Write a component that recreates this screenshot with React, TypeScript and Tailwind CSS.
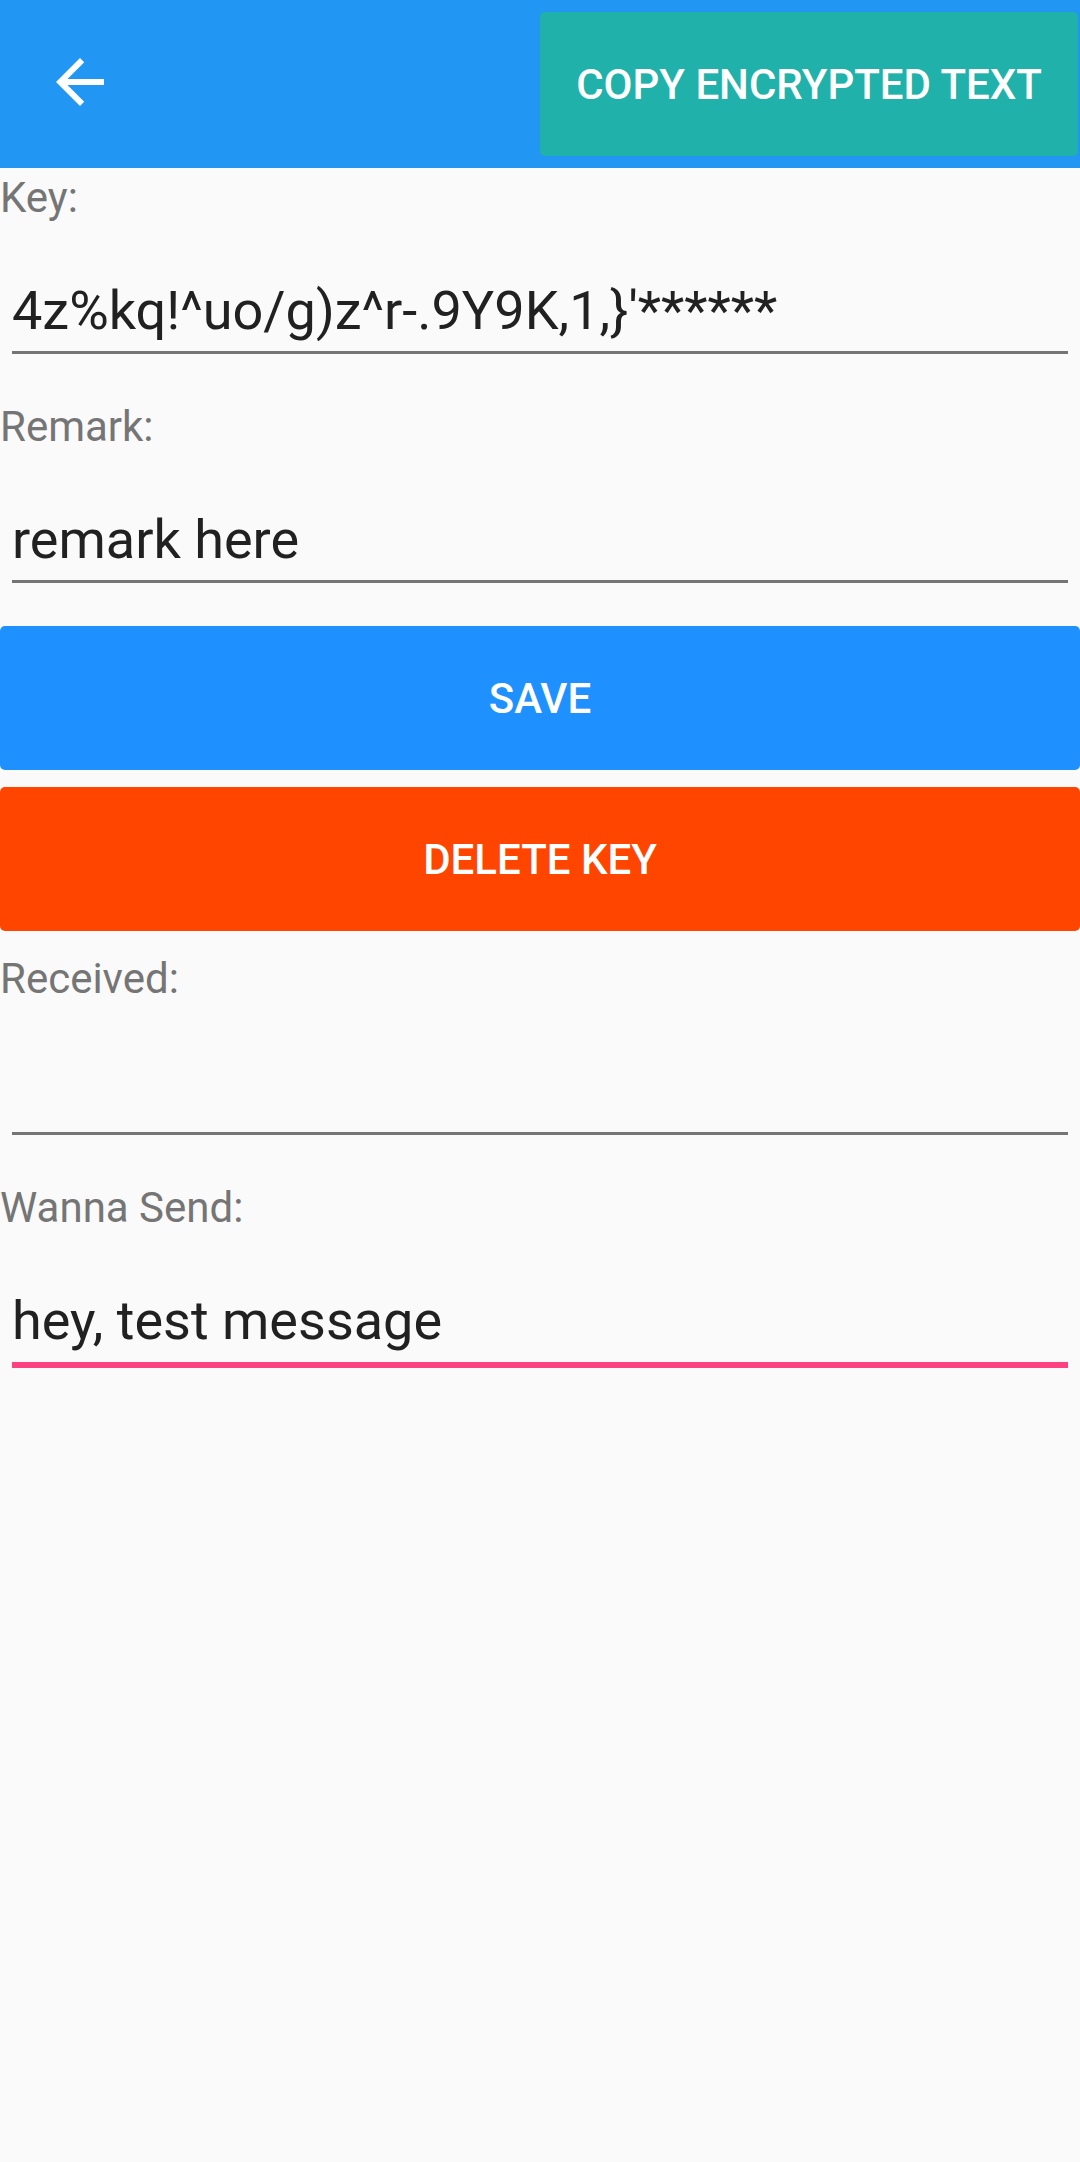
export default function App() {
  return (
    <div className="min-h-screen bg-[#fafafa] font-['Roboto',sans-serif]">
      {/* Toolbar */}
      <div className="flex h-[168px] items-center justify-between bg-[#2196f3]">
        <button className="ml-[44px] mt-[-4px] flex h-[72px] w-[72px] items-center justify-center" aria-label="Back">
          <svg viewBox="0 0 24 24" className="h-[72px] w-[72px]" fill="#ffffff">
            <path d="M20 11H7.83l5.59-5.59L12 4l-8 8 8 8 1.41-1.41L7.83 13H20v-2z" />
          </svg>
        </button>
        <button className="mr-[2px] flex h-[144px] w-[538px] items-center justify-center rounded-[5px] bg-[#20b2aa] text-[42px] font-medium uppercase text-white">
          Copy encrypted text
        </button>
      </div>

      <div className="flex flex-col gap-[43px]">
        <Field label="Key:" value="4z%kq!^uo/g)z^r-.9Y9K,1,}'******" />
        <Field label="Remark:" value="remark here" />
      </div>

      <div className="mt-[43px] flex flex-col gap-[17px]">
        <button className="h-[144px] w-full rounded-[5px] bg-[#1e90ff] text-[42px] font-medium uppercase text-white">
          Save
        </button>
        <button className="h-[144px] w-full rounded-[5px] bg-[#ff4500] text-[42px] font-medium uppercase text-white">
          Delete key
        </button>
      </div>

      <div className="mt-[18px] flex flex-col gap-[43px]">
        <Field label="Received:" value="" />
        <Field label="Wanna Send:" value="hey, test message" focused />
      </div>
    </div>
  )
}

function Field({ label, value, focused }: { label: string; value: string; focused?: boolean }) {
  return (
    <div>
      <div className="h-[59px] text-[42px] leading-[59px] text-[#757575]">{label}</div>
      <div className="mx-[12px] pt-[52px]">
        <div
          className={
            focused
              ? 'h-[79px] border-b-[6px] border-[#ff4081] pb-[10px] text-[54px] leading-[63px] text-[#212121]'
              : 'h-[75px] border-b-[3px] border-[#757575] pb-[9px] text-[54px] leading-[63px] text-[#212121]'
          }
        >
          {value}
        </div>
      </div>
    </div>
  )
}
